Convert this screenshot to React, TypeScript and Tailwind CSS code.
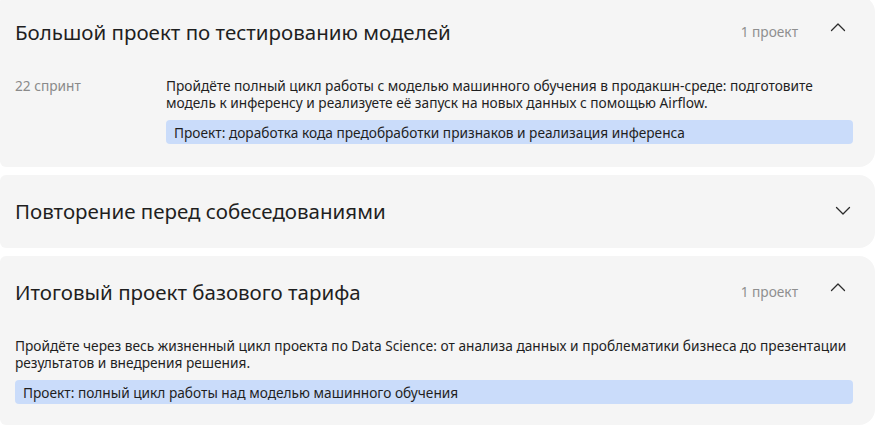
import { ReactNode } from "react";

function Chevron({ up }: { up: boolean }) {
  return (
    <svg width="16" height="10" viewBox="0 0 16 10" fill="none" className="block">
      <polyline
        points={up ? "1.5,8.5 8,2 14.5,8.5" : "1.5,1.5 8,8 14.5,1.5"}
        stroke="#2b2b2b"
        strokeWidth="1.3"
        strokeLinecap="round"
        strokeLinejoin="round"
      />
    </svg>
  );
}

function Card({
  title,
  count,
  open,
  className,
  children,
}: {
  title: string;
  count?: string;
  open: boolean;
  className?: string;
  children?: ReactNode;
}) {
  return (
    <section className={`rounded-r-2xl rounded-l-md bg-[#f5f5f5] pl-[15px] ${className ?? ""}`}>
      <div className={`flex items-center pt-[22px] ${open ? "pb-0 pr-[23px]" : "pb-[23px] pr-[18px]"}`}>
        <h2 className="flex-1 text-[20.5px] leading-7 text-[#1f1f1f]">{title}</h2>
        {count && <span className="mr-[26px] text-[13.7px] leading-5 text-[#8f8f8f]">{count}</span>}
        <div className={`flex w-7 justify-center ${open ? "mb-[10px]" : ""}`}>
          <Chevron up={open} />
        </div>
      </div>
      {open && <div className="pr-[22px]">{children}</div>}
    </section>
  );
}

function Pill({ children }: { children: ReactNode }) {
  return (
    <div className="mt-[9px] flex h-6 items-center rounded bg-[#cadcfa] px-2 text-[13.7px] text-[#1f1f1f]">
      {children}
    </div>
  );
}

export default function App() {
  return (
    <div className="h-[431px] w-[877px] overflow-hidden bg-white font-['Noto_Sans',sans-serif]">
      <div className="flex w-[875px] flex-col gap-2">
        <Card
          className="-mt-1 pb-[23px]"
          title="Большой проект по тестированию моделей"
          count="1 проект"
          open
        >
          <div className="mt-[31px] grid grid-cols-[151px_1fr] text-[13.7px] leading-[17px]">
            <span className="text-[#8a8a8a]">22 спринт</span>
            <div>
              <p className="text-[#1f1f1f]">
                Пройдёте полный цикл работы с моделью машинного обучения в продакшн-среде: подготовите
                модель к инференсу и реализуете её запуск на новых данных с помощью Airflow.
              </p>
              <Pill>Проект: доработка кода предобработки признаков и реализация инференса</Pill>
            </div>
          </div>
        </Card>

        <Card title="Повторение перед собеседованиями" open={false} />

        <Card className="pb-[21px]" title="Итоговый проект базового тарифа" count="1 проект" open>
          <div className="mt-[31px] text-[13.7px] leading-[17px]">
            <p className="text-[#1f1f1f]">
              Пройдёте через весь жизненный цикл проекта по Data Science: от анализа данных и проблематики бизнеса до
              презентации результатов и внедрения решения.
            </p>
            <Pill>Проект: полный цикл работы над моделью машинного обучения</Pill>
          </div>
        </Card>
      </div>
    </div>
  );
}
